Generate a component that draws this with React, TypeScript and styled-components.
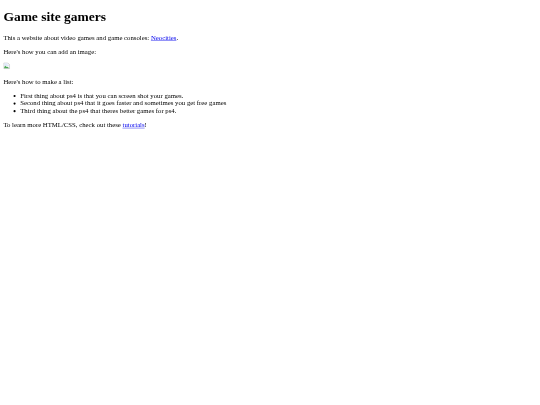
import React from 'react';
import styled, { createGlobalStyle } from 'styled-components';

const GlobalStyle = createGlobalStyle`
    html, body {
        background: #fff;
        margin: 0;
    }
`;

const Page = styled.div`
    box-sizing: border-box;
    color: #000;
    display: flow-root;
    filter: blur(0.5px);
    font-family: "Liberation Serif", "Times New Roman", serif;
    font-size: 16px;
    padding: 0 8px;
    transform: scale(0.421875);
    transform-origin: 0 0;
    width: 1280px;
`;

const Title = styled.h1`
    font-size: 32px;
    font-weight: bold;
    margin: 21.44px 0;
`;

const Paragraph = styled.p`
    margin: 16px 0;
`;

const Link = styled.a`
    color: #0000ee;
    text-decoration: underline;
`;

const BrokenImage = styled.svg`
    display: inline-block;
    height: 16px;
    width: 16px;
`;

const List = styled.ul`
    list-style: disc;
    margin: 16px 0;
    padding-left: 40px;
`;

const App: React.FC = () => {
    return (
        <>
            <GlobalStyle />
            <Page>
                <Title>Game site gamers</Title>
                <Paragraph>
                    This a website about video games and game consoles: <Link href="#">Neocities</Link>.
                </Paragraph>
                <Paragraph>Here's how you can add an image:</Paragraph>
                <Paragraph>
                    <BrokenImage viewBox="0 0 16 16">
                        <path d="M1 1h9l5 5v9H1z" fill="#fff" stroke="#a8a8a8" strokeWidth="1.4" />
                        <path d="M2 2h8v4h4v3H2z" fill="#dfe8f8" />
                        <path d="M2 14v-3l3-3 3 3 2-1 4 4z" fill="#4fa858" />
                    </BrokenImage>
                </Paragraph>
                <Paragraph>Here's how to make a list:</Paragraph>
                <List>
                    <li>First thing about ps4 is that you can screen shot your games.</li>
                    <li>Second thing about ps4 that it goes faster and sometimes you get free games</li>
                    <li>Third thing about the ps4 that theres better games for ps4.</li>
                </List>
                <Paragraph>
                    To learn more HTML/CSS, check out these <Link href="#">tutorials</Link>!
                </Paragraph>
            </Page>
        </>
    );
};

export default App;
